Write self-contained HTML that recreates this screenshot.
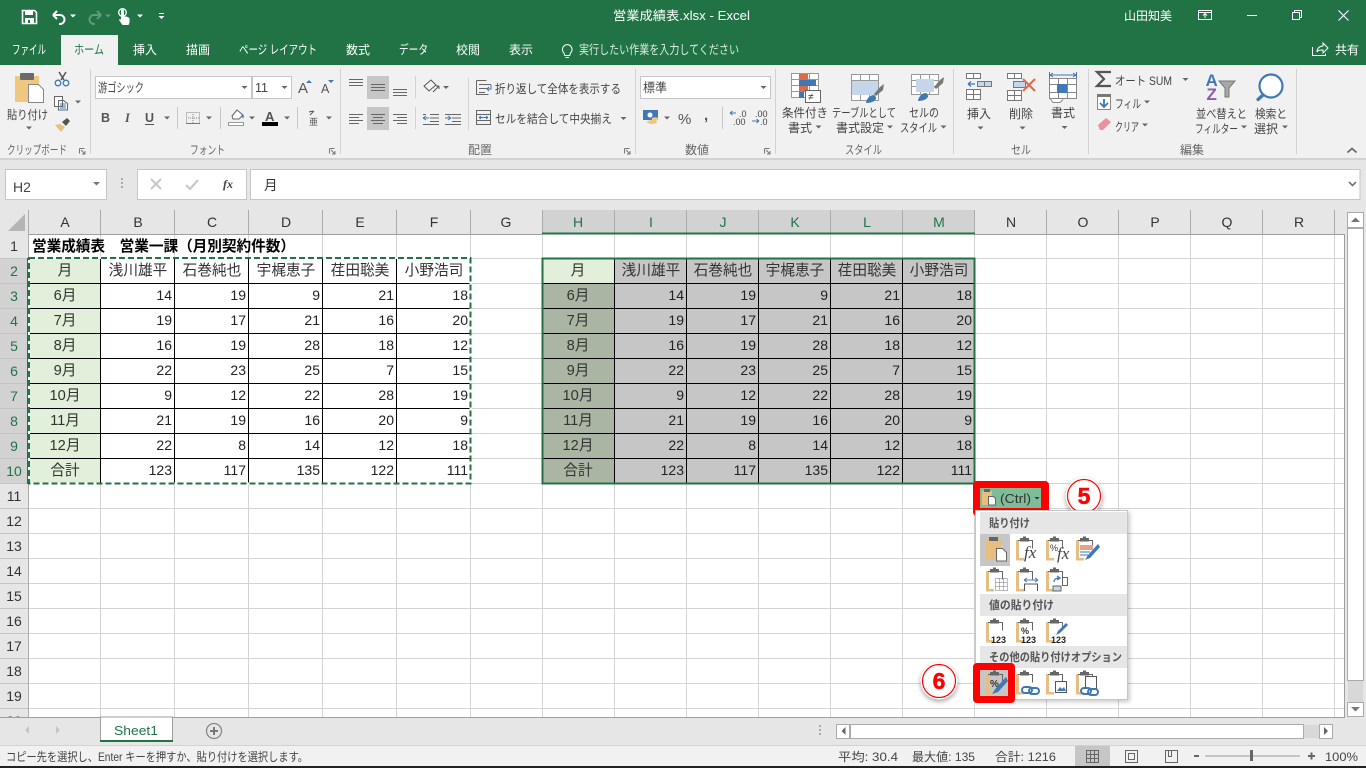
<!DOCTYPE html>
<html lang="ja"><head><meta charset="utf-8"><title>営業成績表.xlsx - Excel</title>
<style>
html,body{margin:0;padding:0;width:1366px;height:768px;overflow:hidden;background:#fff}
svg{display:block}
text{font-family:"Liberation Sans","Noto Sans CJK JP",sans-serif;font-size:11px;fill:#444}
.w{fill:#fff;font-size:12px}
.t{fill:#fff;font-size:12px}
.r{font-size:12px;fill:#444}
.g{font-size:12px;fill:#666}
.h{font-size:14px;fill:#333;text-anchor:middle}
.hs{font-size:14px;fill:#217346;text-anchor:middle}
.n{font-size:14px;fill:#222;text-anchor:end}
.c{font-size:14.67px;fill:#333;text-anchor:middle}
.m{font-size:11.500px;font-weight:bold;fill:#555}
.k{font-size:9px;font-weight:bold;fill:#222}
.fx{font-family:"Liberation Serif",serif;font-style:italic;font-size:17px;fill:#444}
</style></head><body>
<svg xmlns="http://www.w3.org/2000/svg" width="1366" height="768" viewBox="0 0 1366 768">
<defs>
<path id="c" d="M-3-1.5h6l-3 3z" fill="#666"/>
<g id="cb"><rect x="0" y="2" width="3" height="20" fill="#e6bf80"/><rect x="0" y="20" width="8" height="2.5" fill="#e6bf80"/><path d="M2 2.5h14.5v8" fill="none" stroke="#666"/><rect x="4" y="0" width="9" height="3.5" fill="#666"/><rect x="7" y="-1.500" width="3" height="2" fill="#666"/></g>
<g id="lnk"><path d="M2 4a3 3 0 0 1 3-3h4a3 3 0 0 1 0 6h-4a3 3 0 0 1-3-3zM9 5a3 3 0 0 1 3-3h4a3 3 0 0 1 0 6h-4a3 3 0 0 1-3-3z" fill="none" stroke="#3f78b5" stroke-width="2"/></g>
<clipPath id="gc"><rect x="0" y="205" width="1345" height="512"/></clipPath>
<filter id="b" x="-30%" y="-30%" width="160%" height="160%"><feGaussianBlur stdDeviation="2"/></filter>
</defs>

<!-- backgrounds -->
<rect width="1366" height="65" fill="#217346"/>
<rect y="65" width="1366" height="93" fill="#f1f1f1"/>
<rect y="158" width="1366" height="2" fill="#d2d2d2"/>
<rect y="160" width="1366" height="585" fill="#e6e6e6"/>
<rect x="61" y="35" width="57" height="30" fill="#f1f1f1"/>

<!-- QAT -->
<path d="M22.500 10.500h12l2 2v11h-14z" fill="none" stroke="#fff" stroke-width="1.600"/><rect x="25" y="10" width="8" height="5" fill="#fff"/><rect x="25" y="18" width="9" height="5" fill="#fff"/><rect x="28" y="20" width="2" height="3" fill="#217346"/>
<path d="M53 13l4-4M53 13l4 4M53 13h7a4.500 4.500 0 0 1 0 9h-1" transform="translate(0,2)" fill="none" stroke="#fff" stroke-width="2"/>
<path d="M70 14.500h6l-3 3z" fill="#fff"/>
<path d="M101 13l-4-4M101 13l-4 4M101 13h-7a4.500 4.500 0 0 0 0 9h1" transform="translate(0,2)" fill="none" stroke="#5f9b7c" stroke-width="2"/>
<path d="M105 14.500h6l-3 3z" fill="#5f9b7c"/>
<circle cx="122.500" cy="12.500" r="3.800" fill="none" stroke="#fff" stroke-width="1.300"/>
<path d="M121 11a1.500 1.500 0 0 1 3 0v5.500h2.500l3 1.500v4.500l-1 2.500h-6l-3.500-5 1-1 1 .8z" fill="#fff"/><path d="M137 14.500h6l-3 3z" fill="#fff"/>
<rect x="159" y="13" width="5" height="1" fill="#fff"/><path d="M158.500 16h6l-3 3z" fill="#fff"/>
<text x="613" y="20" style="fill:#fff;font-size:12.500px" textLength="137" lengthAdjust="spacingAndGlyphs">営業成績表.xlsx  -  Excel</text>
<text class="t" x="1124" y="20" textLength="48">山田知美</text>
<path d="M1198.500 10.500h13v9h-13zM1198.500 12.500h13M1205 18v-4M1203 15.500l2-2 2 2" fill="none" stroke="#fff"/>
<rect x="1247" y="15" width="10" height="1" fill="#fff"/>
<path d="M1292.500 12.500h7v7h-7zM1294.500 12.500v-2h7v7h-2" fill="none" stroke="#fff"/>
<path d="M1338.500 10.500l10 10M1348.500 10.500l-10 10" fill="none" stroke="#fff" stroke-width="1.100"/>

<!-- tabs -->
<text x="12" y="54" style="fill:#fff;font-size:12.500px" textLength="34" lengthAdjust="spacingAndGlyphs">ファイル</text>
<text x="74" y="54" style="font-size:12.500px;fill:#217346" textLength="30" lengthAdjust="spacingAndGlyphs">ホーム</text>
<text class="t" x="133" y="54" textLength="24">挿入</text>
<text class="t" x="186" y="54" textLength="24">描画</text>
<text x="239" y="54" style="fill:#fff;font-size:12.500px" textLength="78" lengthAdjust="spacingAndGlyphs">ページ レイアウト</text>
<text class="t" x="346" y="54" textLength="24">数式</text>
<text x="399" y="54" style="fill:#fff;font-size:12.500px" textLength="29" lengthAdjust="spacingAndGlyphs">データ</text>
<text class="t" x="456" y="54" textLength="24">校閲</text>
<text class="t" x="509" y="54" textLength="24">表示</text>
<path d="M564 53a4.800 4.800 0 1 1 6.500 0l-.8 2.500h-4.900zM565.500 57.500h3.500" fill="none" stroke="#fff"/>
<text x="579" y="54" style="font-size:12.500px;fill:#dcebe3" textLength="160" lengthAdjust="spacingAndGlyphs">実行したい作業を入力してください</text>
<path d="M1312.500 47v8.500h13v-2M1317 52c0-4 3-6 6-6v-3l5 5-5 5v-3c-3 0-5 0-6 2z" fill="none" stroke="#fff"/>
<text class="t" x="1335" y="54" textLength="24">共有</text>

<!-- ribbon dividers -->
<path d="M90.500 69v85M340.500 69v85M635.500 69v85M775.500 69v85M953.500 69v85M1088.500 69v85M1296.500 69v85" stroke="#d2d2d2"/>
<!-- group labels -->
<text class="g" x="7" y="154" textLength="60" lengthAdjust="spacingAndGlyphs">クリップボード</text>
<text class="g" x="190" y="154" textLength="35" lengthAdjust="spacingAndGlyphs">フォント</text>
<text class="g" x="468" y="154" textLength="24" lengthAdjust="spacingAndGlyphs">配置</text>
<text class="g" x="685" y="154" textLength="24" lengthAdjust="spacingAndGlyphs">数値</text>
<text class="g" x="845" y="154" textLength="37" lengthAdjust="spacingAndGlyphs">スタイル</text>
<text class="g" x="1011" y="154" textLength="20" lengthAdjust="spacingAndGlyphs">セル</text>
<text class="g" x="1180" y="154" textLength="24" lengthAdjust="spacingAndGlyphs">編集</text>
<path d="M79.500 148.500h5M79.500 148.500v5M81 150l4 4M85 151v3h-3" fill="none" stroke="#777"/>
<path d="M329.500 148.500h5M329.500 148.500v5M331 150l4 4M335 151v3h-3M624.500 148.500h5M624.500 148.500v5M626 150l4 4M630 151v3h-3M764.500 148.500h5M764.500 148.500v5M766 150l4 4M770 151v3h-3" fill="none" stroke="#777"/>
<path d="M1347.500 152.500l4.500-4 4.500 4" fill="none" stroke="#666" stroke-width="1.600"/>

<!-- clipboard group -->
<rect x="15" y="76" width="24" height="26" fill="#efc77f"/><rect x="20" y="73" width="14" height="7" rx="1" fill="#6b6b6b"/>
<path d="M28.500 84.500h10l5 5v13h-15z" fill="#fff" stroke="#888"/>
<text class="r" x="7" y="119" textLength="41" lengthAdjust="spacingAndGlyphs">貼り付け</text><use href="#c" x="29" y="128"/>
<path d="M59 72l5 8M66 72l-5 8" stroke="#555" stroke-width="1.500" fill="none"/><circle cx="58" cy="83" r="2.800" fill="none" stroke="#3f78b5" stroke-width="1.300"/><circle cx="66" cy="83" r="2.800" fill="none" stroke="#3f78b5" stroke-width="1.300"/>
<path d="M54.500 96.500h8v10h-8zM58.500 100.500h5l4 3v6.500h-9z" fill="#fff" stroke="#666"/><path d="M60 104h6M60 106h6M60 108h6" stroke="#3f78b5"/><use href="#c" x="78" y="102"/>
<path d="M55 125l6 7 4-5-5-3z" fill="#e8c07d"/><path d="M62 122l5-4 3 3-4 5z" fill="#555"/>

<!-- font group -->
<rect x="95.500" y="76.500" width="156" height="22" fill="#fff" stroke="#c6c6c6"/>
<rect x="252.500" y="76.500" width="39" height="22" fill="#fff" stroke="#c6c6c6"/>
<text x="98" y="92" style="font-size:12.500px;fill:#444" textLength="46" lengthAdjust="spacingAndGlyphs">游ゴシック</text><use href="#c" x="244.500" y="87.500"/>
<text x="255" y="92" style="font-size:12.500px;fill:#444">11</text><use href="#c" x="284.500" y="87.500"/>
<text x="298" y="93" style="font-size:15px;fill:#555">A</text><path d="M306 83h6l-3-3z" fill="#3f78b5"/>
<text x="321" y="93" style="font-size:12.500px;fill:#555">A</text><path d="M328 80h6l-3 3z" fill="#3f78b5"/>
<text x="101" y="122" style="font-size:12.500px;font-weight:bold;fill:#555">B</text>
<text x="125" y="122" style="font-size:12.500px;font-style:italic;font-weight:bold;fill:#555;font-family:'Liberation Serif',serif">I</text>
<text x="145" y="122" style="font-size:12.500px;font-weight:bold;fill:#555">U</text><rect x="145" y="124" width="9" height="1" fill="#555"/>
<use href="#c" x="167" y="118"/>
<path d="M177.500 107v22M220.500 107v22M297.500 107v22" stroke="#c6c6c6"/>
<path d="M186.500 112.500h13v11h-13zM193 112v12M186 118h14" fill="none" stroke="#888" stroke-dasharray="1 1"/><rect x="186" y="123" width="14" height="1" fill="#777"/><use href="#c" x="209" y="118"/>
<path d="M232 116l5-6 6 5-4 4h-6z" fill="#fff" stroke="#666"/><path d="M241 113l3 3-1 3z" fill="#3f78b5"/><rect x="228.500" y="122.500" width="15" height="3" fill="#fff" stroke="#999"/><use href="#c" x="252" y="118"/>
<text x="265" y="121" style="font-size:13px;font-weight:bold;fill:#555">A</text><rect x="262" y="122" width="16" height="4" fill="#000"/><use href="#c" x="287" y="118"/>
<path d="M309 112l4-1M310 115l4-4" stroke="#555" fill="none"/><text x="309" y="125" style="font-size:9px;fill:#555">亜</text><use href="#c" x="329" y="118"/>

<!-- alignment -->
<rect x="367" y="76" width="22" height="23" fill="#c6c6c6"/><rect x="367" y="107" width="22" height="23" fill="#c6c6c6"/>
<path d="M349 79.500h14M349 82.500h14M349 85.500h14M371 84.500h14M371 87.500h14M371 90.500h14M393 89.500h14M393 92.500h14M393 95.500h14" stroke="#666"/>
<path d="M349 114.500h14M349 117.500h10M349 120.500h14M349 123.500h10M371 114.500h14M373 117.500h10M371 120.500h14M373 123.500h10M393 114.500h14M397 117.500h10M393 120.500h14M397 123.500h10" stroke="#666"/>
<path d="M415.500 76v22M415.500 107v22M468.500 78v52" stroke="#d2d2d2"/>
<path d="M424 86l7-6 5 5-7 6zM433 92l6-6M439 86h-3M439 86v3" fill="none" stroke="#555"/><use href="#c" x="446" y="87.500"/>
<path d="M430 114.500h9M430 118h9M430 121.500h9M423 124.500h16M423 114.500h3" stroke="#666"/><path d="M423 118h6M423 118l3-2M423 118l3 2" stroke="#3f78b5" fill="none"/>
<path d="M445 114.500h16M452 118h9M452 121.500h9M445 124.500h16" stroke="#666"/><path d="M445 118h6M451 118l-3-2M451 118l-3 2" stroke="#3f78b5" fill="none"/>
<path d="M476.500 80.500h10M476.500 80.500v14h12M479 84.500h12M479 88.500h8M479 92.500h6" fill="none" stroke="#666"/><path d="M491 85v4h-4M487 89l2-2M487 89l2 2" fill="none" stroke="#3f78b5"/>
<text class="r" x="495" y="93" textLength="126" lengthAdjust="spacingAndGlyphs">折り返して全体を表示する</text>
<path d="M476.500 110.500h14v14h-14zM476.500 114.500h14M476.500 120.500h14" fill="none" stroke="#666"/><path d="M479 117.500h9M479 117.500l2-1.500M479 117.500l2 1.500M488 117.500l-2-1.500M488 117.500l-2 1.500" stroke="#3f78b5" fill="none"/>
<text class="r" x="495" y="123" textLength="117" lengthAdjust="spacingAndGlyphs">セルを結合して中央揃え</text><use href="#c" x="623.500" y="118.500"/>

<!-- number -->
<rect x="640.500" y="76.500" width="130" height="22" fill="#fff" stroke="#c6c6c6"/>
<text x="643" y="92" style="font-size:12.500px;fill:#444" textLength="24" lengthAdjust="spacingAndGlyphs">標準</text><use href="#c" x="763.500" y="87.500"/>
<rect x="643" y="110" width="15" height="10" fill="#3f78b5"/><circle cx="650" cy="115" r="2.500" fill="#fff"/><ellipse cx="652" cy="122" rx="5" ry="2" fill="#efc77f"/><ellipse cx="655" cy="119" rx="3.500" ry="1.800" fill="#efc77f"/><use href="#c" x="667" y="118"/>
<text x="678" y="124" style="font-size:15px;fill:#555">%</text><text x="704" y="120" style="font-size:15px;font-weight:bold;fill:#555">,</text>
<path d="M722.500 107v22" stroke="#c6c6c6"/>
<text x="739" y="117" style="font-size:9px;fill:#444">.0</text><text x="733" y="125" style="font-size:9px;fill:#444">.00</text><path d="M730 113h6M730 113l2.500-2M730 113l2.500 2" stroke="#3f78b5" fill="none"/>
<text x="755" y="117" style="font-size:9px;fill:#444">.00</text><text x="760" y="125" style="font-size:9px;fill:#444">.0</text><path d="M752 121h7M759 121l-2.500-2M759 121l-2.500 2" stroke="#3f78b5" fill="none"/>

<!-- styles -->
<path d="M791.500 73.500h27v24h-27zM791.500 79.500h27M791.500 85.500h27M791.500 91.500h27M800.500 73.500v24M809.500 73.500v24" fill="#fff" stroke="#999"/>
<rect x="799" y="74" width="9" height="6" fill="#dd6b4a"/><rect x="799" y="80" width="17" height="6" fill="#3f78b5"/><rect x="799" y="86" width="9" height="6" fill="#dd6b4a"/><rect x="799" y="92" width="5" height="6" fill="#3f78b5"/>
<rect x="805.500" y="90.500" width="15" height="12" fill="#fff" stroke="#666"/><text x="808" y="100" style="font-size:10px;fill:#333">≠</text>
<text class="r" x="782" y="117" textLength="46" lengthAdjust="spacingAndGlyphs">条件付き</text><text class="r" x="788" y="132" textLength="24" lengthAdjust="spacingAndGlyphs">書式</text><use href="#c" x="818.500" y="127"/>
<path d="M851.500 74.500h27v26h-27zM851.500 80.500h27M851.500 86.500h27M851.500 92.500h27M860.500 74.500v26M869.500 74.500v26" fill="#fff" stroke="#999"/><rect x="852" y="81" width="26" height="14" fill="#c5d5ea"/>
<path d="M880 87l-6 7 2 2 7-6 1-6z" fill="#777"/><path d="M866 103c1-6 5-8 8-8 2 1 2 3 2 4-2 3-6 4-10 4z" fill="#3f78b5"/>
<text class="r" x="832" y="117" textLength="64" lengthAdjust="spacingAndGlyphs">テーブルとして</text><text class="r" x="836" y="132" textLength="48" lengthAdjust="spacingAndGlyphs">書式設定</text><use href="#c" x="890" y="127"/>
<path d="M911.500 74.500h27v20h-27zM911.500 80.500h27M911.500 86.500h27M920.500 74.500v20M929.500 74.500v20" fill="#fff" stroke="#999"/><rect x="916" y="79" width="18" height="13" fill="#c5d5ea"/>
<path d="M940 80l-6 7 2 2 7-6 1-6z" fill="#777"/><path d="M918 101c1-6 5-8 8-8 2 1 2 3 2 4-2 3-6 4-10 4z" fill="#3f78b5"/>
<text class="r" x="909" y="117" textLength="30" lengthAdjust="spacingAndGlyphs">セルの</text><text class="r" x="900" y="132" textLength="37" lengthAdjust="spacingAndGlyphs">スタイル</text><use href="#c" x="943.500" y="127"/>

<!-- cells -->
<path d="M966.500 73.500h14v5h-14zM973.500 73.500v5M966.500 89.500h14v10h-14zM966.500 94.500h14M973.500 89.500v10" fill="#fff" stroke="#777"/>
<path d="M977.500 81.500h14v5h-14zM984.500 81.500v5" fill="#c5d5ea" stroke="#777"/><path d="M968 84h7M968 84l3-2.500M968 84l3 2.500" stroke="#3f78b5" stroke-width="1.300" fill="none"/>
<text class="r" x="967" y="118" textLength="24" lengthAdjust="spacingAndGlyphs">挿入</text><use href="#c" x="980.500" y="128"/>
<path d="M1007.500 73.500h14v5h-14zM1014.500 73.500v5M1007.500 90.500h14v10h-14zM1007.500 95.500h14M1014.500 90.500v10" fill="#fff" stroke="#777"/><path d="M1013.500 81.500h12v6h-12z" fill="#c5d5ea" stroke="#777"/>
<path d="M1023 79l12 12M1035 79l-12 12" stroke="#dd6b4a" stroke-width="2"/>
<text class="r" x="1009" y="118" textLength="24" lengthAdjust="spacingAndGlyphs">削除</text><use href="#c" x="1022.500" y="128"/>
<path d="M1049.500 72v6M1076.500 72v6M1050 75h26M1050 75l3-2M1050 75l3 2M1076 75l-3-2M1076 75l-3 2" stroke="#3f78b5" fill="none"/>
<path d="M1049.500 78.500h27v20h-27zM1049.500 84.500h27M1049.500 92.500h27M1058.500 78.500v20M1067.500 78.500v20M1050 98.500l3 4h7l3-3" fill="#fff" stroke="#888"/><rect x="1057" y="84" width="10" height="9" fill="#3f78b5"/>
<text class="r" x="1051" y="117" textLength="24" lengthAdjust="spacingAndGlyphs">書式</text><use href="#c" x="1064.500" y="127.500"/>

<!-- edit -->
<path d="M1111 72h-14l7 7-7 7h14" fill="none" stroke="#555" stroke-width="2.200"/>
<text class="r" x="1115" y="85" textLength="57" lengthAdjust="spacingAndGlyphs">オート SUM</text><use href="#c" x="1185.500" y="79.500"/>
<path d="M1097.500 94.500h13v15h-13z" fill="#fff" stroke="#888"/><rect x="1097" y="94" width="14" height="3" fill="#777"/><path d="M1104 99v8M1100 103l4 4 4-4" fill="none" stroke="#3f78b5" stroke-width="1.800"/>
<text class="r" x="1115" y="108" textLength="26" lengthAdjust="spacingAndGlyphs">フィル</text><use href="#c" x="1147" y="102"/>
<path d="M1098 125l8-7 5 4-8 8h-3z" fill="#ec8fa0"/>
<text class="r" x="1115" y="131" textLength="24" lengthAdjust="spacingAndGlyphs">クリア</text><use href="#c" x="1145" y="125"/>
<text x="1205.500" y="86" style="font-size:17px;font-weight:bold;fill:#3f78b5">A</text><text x="1206.500" y="100" style="font-size:17px;font-weight:bold;fill:#8a5bb0">Z</text>
<path d="M1219 81h16l-6 7v9h-4v-9z" fill="#a8a8a8" stroke="#777"/>
<circle cx="1271" cy="86" r="11.500" fill="#fff" stroke="#3f78b5" stroke-width="2.200"/><path d="M1263 95l-5 4.500" stroke="#3f78b5" stroke-width="3.200" stroke-linecap="round"/>
<text class="r" x="1196" y="118" textLength="51" lengthAdjust="spacingAndGlyphs">並べ替えと</text><text class="r" x="1195" y="133" textLength="43" lengthAdjust="spacingAndGlyphs">フィルター</text><use href="#c" x="1244" y="127"/>
<text class="r" x="1255" y="118" textLength="32" lengthAdjust="spacingAndGlyphs">検索と</text><text class="r" x="1254" y="133" textLength="24" lengthAdjust="spacingAndGlyphs">選択</text><use href="#c" x="1285" y="127"/>

<!-- formula bar -->
<rect x="5.500" y="169.500" width="101" height="30" fill="#fff" stroke="#c6c6c6"/>
<text x="13" y="192" style="font-size:14px;fill:#444">H2</text><path d="M93 182h7l-3.500 3.500z" fill="#777"/>
<path d="M122 178v12" stroke="#aaa" stroke-dasharray="2 2" stroke-width="2"/>
<rect x="137.500" y="169.500" width="109" height="30" fill="#fff" stroke="#c6c6c6"/>
<rect x="250.500" y="169.500" width="1109.500" height="30" fill="#fff" stroke="#c6c6c6"/>
<path d="M151 179l10 10M161 179l-10 10" stroke="#c8c8c8" stroke-width="2"/><path d="M186 185l4 4 8-9" fill="none" stroke="#c8c8c8" stroke-width="2.200"/>
<text class="fx" x="223" y="188" style="font-size:12px;font-weight:bold">fx</text>
<text x="264" y="190" style="font-size:13.500px;fill:#333">月</text>
<path d="M1349 182l3.500 3.500 3.500-3.500" fill="none" stroke="#666" stroke-width="1.500"/>

<!-- column headers -->
<rect x="29" y="210" width="1316" height="24" fill="#e6e6e6"/>
<rect x="542" y="210" width="433" height="24" fill="#d2d2d2"/>
<path d="M8 231l17-17v17z" fill="#b5b5b5"/>
<path d="M28.500 210v24M100.500 210v24M174.500 210v24M248.500 210v24M322.500 210v24M396.500 210v24M470.500 210v24M542.500 210v24M614.500 210v24M686.500 210v24M758.500 210v24M830.500 210v24M902.500 210v24M974.500 210v24M1046.500 210v24M1118.500 210v24M1190.500 210v24M1262.500 210v24M1334.500 210v24" stroke="#ababab"/>
<text class="h" x="65" y="227">A</text><text class="h" x="138" y="227">B</text><text class="h" x="212" y="227">C</text><text class="h" x="286" y="227">D</text><text class="h" x="360" y="227">E</text><text class="h" x="434" y="227">F</text><text class="h" x="506" y="227">G</text>
<text class="hs" x="578" y="227">H</text><text class="hs" x="651" y="227">I</text><text class="hs" x="723" y="227">J</text><text class="hs" x="795" y="227">K</text><text class="hs" x="867" y="227">L</text><text class="hs" x="939" y="227">M</text>
<text class="h" x="1011" y="227">N</text><text class="h" x="1083" y="227">O</text><text class="h" x="1155" y="227">P</text><text class="h" x="1227" y="227">Q</text><text class="h" x="1299" y="227">R</text>

<g clip-path="url(#gc)">
<!-- sheet white -->
<rect x="29" y="234" width="1316" height="483" fill="#fff"/>
<!-- row headers -->
<rect x="0" y="234" width="28" height="483" fill="#e6e6e6"/>
<rect x="0" y="259" width="28" height="225" fill="#d2d2d2"/>
<path d="M0 258.500h28M0 283.500h28M0 308.500h28M0 333.500h28M0 358.500h28M0 383.500h28M0 408.500h28M0 433.500h28M0 458.500h28M0 483.500h28M0 508.500h28M0 533.500h28M0 558.500h28M0 583.500h28M0 608.500h28M0 633.500h28M0 658.500h28M0 683.500h28M0 708.500h28" stroke="#c4c4c4"/>
<path d="M28.500 234v483" stroke="#ababab"/>
<text class="h" x="14" y="251">1</text>
<text class="hs" x="14" y="276">2</text><text class="hs" x="14" y="301">3</text><text class="hs" x="14" y="326">4</text><text class="hs" x="14" y="351">5</text><text class="hs" x="14" y="376">6</text><text class="hs" x="14" y="401">7</text><text class="hs" x="14" y="426">8</text><text class="hs" x="14" y="451">9</text><text class="hs" x="14" y="476">10</text>
<text class="h" x="14" y="501">11</text><text class="h" x="14" y="526">12</text><text class="h" x="14" y="551">13</text><text class="h" x="14" y="576">14</text><text class="h" x="14" y="601">15</text><text class="h" x="14" y="626">16</text><text class="h" x="14" y="651">17</text><text class="h" x="14" y="676">18</text><text class="h" x="14" y="701">19</text><text class="h" x="14" y="726">20</text>
<!-- gridlines -->
<path d="M100.500 234v483M174.500 234v483M248.500 234v483M322.500 234v483M396.500 234v483M470.500 234v483M542.500 234v483M614.500 234v483M686.500 234v483M758.500 234v483M830.500 234v483M902.500 234v483M974.500 234v483M1046.500 234v483M1118.500 234v483M1190.500 234v483M1262.500 234v483M1334.500 234v483M29 258.500h1316M29 283.500h1316M29 308.500h1316M29 333.500h1316M29 358.500h1316M29 383.500h1316M29 408.500h1316M29 433.500h1316M29 458.500h1316M29 483.500h1316M29 508.500h1316M29 533.500h1316M29 558.500h1316M29 583.500h1316M29 608.500h1316M29 633.500h1316M29 658.500h1316M29 683.500h1316M29 708.500h1316" stroke="#d4d4d4"/>
</g>
<path d="M29 234.500h513M975 234.500h369.500v483" fill="none" stroke="#9e9e9e"/>
<rect x="542" y="232.500" width="433" height="2" fill="#217346"/>
<rect x="27" y="258" width="2" height="226" fill="#217346"/>

<!-- left table -->
<rect x="29" y="259" width="71.500" height="225" fill="#e2efda"/>
<path d="M100.500 258v226M174.500 258v226M248.500 258v226M322.500 258v226M396.500 258v226M29 283.500h441M29 308.500h441M29 333.500h441M29 358.500h441M29 383.500h441M29 408.500h441M29 433.500h441M29 458.500h441" stroke="#000"/>
<rect x="29" y="258" width="441.500" height="225.500" fill="none" stroke="#fff" stroke-width="2"/>
<rect x="29" y="258" width="441.500" height="225.500" fill="none" stroke="#217346" stroke-width="2" stroke-dasharray="6 3"/>
<text x="32" y="251" style="font-size:14.67px;font-weight:bold;fill:#000" textLength="263">営業成績表　営業一課（月別契約件数）</text>
<text class="c" x="65" y="275">月</text><text class="c" x="138" y="275">浅川雄平</text><text class="c" x="212" y="275">石巻純也</text><text class="c" x="286" y="275">宇梶恵子</text><text class="c" x="360" y="275">荏田聡美</text><text class="c" x="434" y="275">小野浩司</text>
<text class="c" x="65" y="300">6月</text><text class="c" x="65" y="325">7月</text><text class="c" x="65" y="350">8月</text><text class="c" x="65" y="375">9月</text><text class="c" x="65" y="400">10月</text><text class="c" x="65" y="425">11月</text><text class="c" x="65" y="450">12月</text><text class="c" x="65" y="475">合計</text>
<text class="n" x="172" y="300">14</text><text class="n" x="172" y="325">19</text><text class="n" x="172" y="350">16</text><text class="n" x="172" y="375">22</text><text class="n" x="172" y="400">9</text><text class="n" x="172" y="425">21</text><text class="n" x="172" y="450">22</text><text class="n" x="172" y="475">123</text>
<text class="n" x="246" y="300">19</text><text class="n" x="246" y="325">17</text><text class="n" x="246" y="350">19</text><text class="n" x="246" y="375">23</text><text class="n" x="246" y="400">12</text><text class="n" x="246" y="425">19</text><text class="n" x="246" y="450">8</text><text class="n" x="246" y="475">117</text>
<text class="n" x="320" y="300">9</text><text class="n" x="320" y="325">21</text><text class="n" x="320" y="350">28</text><text class="n" x="320" y="375">25</text><text class="n" x="320" y="400">22</text><text class="n" x="320" y="425">16</text><text class="n" x="320" y="450">14</text><text class="n" x="320" y="475">135</text>
<text class="n" x="394" y="300">21</text><text class="n" x="394" y="325">16</text><text class="n" x="394" y="350">18</text><text class="n" x="394" y="375">7</text><text class="n" x="394" y="400">28</text><text class="n" x="394" y="425">20</text><text class="n" x="394" y="450">12</text><text class="n" x="394" y="475">122</text>
<text class="n" x="468" y="300">18</text><text class="n" x="468" y="325">20</text><text class="n" x="468" y="350">12</text><text class="n" x="468" y="375">15</text><text class="n" x="468" y="400">19</text><text class="n" x="468" y="425">9</text><text class="n" x="468" y="450">18</text><text class="n" x="468" y="475">111</text>

<!-- right table -->
<rect x="543" y="259" width="432" height="225" fill="#c6c6c6"/>
<rect x="543" y="284" width="71.500" height="200" fill="#aab6a3"/>
<rect x="543" y="259" width="71.500" height="24.500" fill="#e2efda"/>
<path d="M614.500 258v226M686.500 258v226M758.500 258v226M830.500 258v226M902.500 258v226M543 283.500h432M543 308.500h432M543 333.500h432M543 358.500h432M543 383.500h432M543 408.500h432M543 433.500h432M543 458.500h432" stroke="#000"/>
<rect x="542.500" y="258.500" width="432" height="225" fill="none" stroke="#217346" stroke-width="2"/>
<text class="c" x="578" y="275">月</text><text class="c" x="651" y="275">浅川雄平</text><text class="c" x="723" y="275">石巻純也</text><text class="c" x="795" y="275">宇梶恵子</text><text class="c" x="867" y="275">荏田聡美</text><text class="c" x="939" y="275">小野浩司</text>
<text class="c" x="578" y="300">6月</text><text class="c" x="578" y="325">7月</text><text class="c" x="578" y="350">8月</text><text class="c" x="578" y="375">9月</text><text class="c" x="578" y="400">10月</text><text class="c" x="578" y="425">11月</text><text class="c" x="578" y="450">12月</text><text class="c" x="578" y="475">合計</text>
<text class="n" x="684" y="300">14</text><text class="n" x="684" y="325">19</text><text class="n" x="684" y="350">16</text><text class="n" x="684" y="375">22</text><text class="n" x="684" y="400">9</text><text class="n" x="684" y="425">21</text><text class="n" x="684" y="450">22</text><text class="n" x="684" y="475">123</text>
<text class="n" x="756" y="300">19</text><text class="n" x="756" y="325">17</text><text class="n" x="756" y="350">19</text><text class="n" x="756" y="375">23</text><text class="n" x="756" y="400">12</text><text class="n" x="756" y="425">19</text><text class="n" x="756" y="450">8</text><text class="n" x="756" y="475">117</text>
<text class="n" x="828" y="300">9</text><text class="n" x="828" y="325">21</text><text class="n" x="828" y="350">28</text><text class="n" x="828" y="375">25</text><text class="n" x="828" y="400">22</text><text class="n" x="828" y="425">16</text><text class="n" x="828" y="450">14</text><text class="n" x="828" y="475">135</text>
<text class="n" x="900" y="300">21</text><text class="n" x="900" y="325">16</text><text class="n" x="900" y="350">18</text><text class="n" x="900" y="375">7</text><text class="n" x="900" y="400">28</text><text class="n" x="900" y="425">20</text><text class="n" x="900" y="450">12</text><text class="n" x="900" y="475">122</text>
<text class="n" x="972" y="300">18</text><text class="n" x="972" y="325">20</text><text class="n" x="972" y="350">12</text><text class="n" x="972" y="375">15</text><text class="n" x="972" y="400">19</text><text class="n" x="972" y="425">9</text><text class="n" x="972" y="450">18</text><text class="n" x="972" y="475">111</text>

<!-- vertical scrollbar -->
<rect x="1347.500" y="212.500" width="16" height="15" fill="#fff" stroke="#ababab"/><path d="M1351 222h9l-4.500-4.500z" fill="#777"/>
<rect x="1347.500" y="228.500" width="16" height="452" fill="#fff" stroke="#ababab"/>
<rect x="1348" y="681" width="15" height="21" fill="#d8d8d8"/>
<rect x="1347.500" y="702.500" width="16" height="14" fill="#fff" stroke="#ababab"/><path d="M1351 707h9l-4.500 4.500z" fill="#777"/>

<!-- sheet tab bar -->
<path d="M0 717.500h1345" stroke="#9e9e9e"/>
<path d="M29 726l-4 4 4 4zM56 726l4 4-4 4z" fill="#c4c4c4"/>
<rect x="100.500" y="717" width="72" height="24" fill="#fff" stroke="#9e9e9e"/><rect x="100" y="740" width="73" height="2" fill="#217346"/>
<text x="114" y="735" style="font-size:12.500px;fill:#217346" textLength="44" lengthAdjust="spacingAndGlyphs">Sheet1</text>
<circle cx="214" cy="731" r="7.500" fill="none" stroke="#888" stroke-width="1.300"/><path d="M210 731h8M214 727v8" stroke="#777" stroke-width="2"/>
<path d="M820 725v12" stroke="#aaa" stroke-width="2" stroke-dasharray="2 2"/>
<rect x="836.500" y="724.500" width="13" height="14" fill="#fff" stroke="#ababab"/><path d="M845.500 727v8l-4-4z" fill="#666"/>
<rect x="850.500" y="724.500" width="453" height="14" fill="#fff" stroke="#ababab"/>
<rect x="1304" y="725" width="15" height="13" fill="#d8d8d8"/>
<rect x="1319.500" y="724.500" width="13" height="14" fill="#fff" stroke="#ababab"/><path d="M1324 727v8l4-4z" fill="#666"/>

<!-- status bar -->
<rect y="745" width="1366" height="21" fill="#f1f1f1"/>
<path d="M0 745.500h1366" stroke="#d2d2d2"/>
<rect y="766" width="1366" height="2" fill="#222"/>
<text class="r" x="6" y="761" textLength="302" lengthAdjust="spacingAndGlyphs">コピー先を選択し、Enter キーを押すか、貼り付けを選択します。</text>
<text class="r" x="838" y="761" textLength="60" lengthAdjust="spacingAndGlyphs">平均: 30.4</text>
<text class="r" x="912" y="761" textLength="63" lengthAdjust="spacingAndGlyphs">最大値: 135</text>
<text class="r" x="995" y="761" textLength="61" lengthAdjust="spacingAndGlyphs">合計: 1216</text>
<rect x="1075" y="746" width="35" height="20" fill="#c6c6c6"/>
<path d="M1086.500 750.500h12v12h-12zM1086.500 754.500h12M1086.500 758.500h12M1090.500 750.500v12M1094.500 750.500v12" fill="none" stroke="#666"/>
<path d="M1125.500 750.500h12v12h-12zM1128.500 753.500h6v6h-6z" fill="none" stroke="#666"/>
<path d="M1165.500 750.500h12v12h-12zM1171.500 750.500v6h-3v-6" fill="none" stroke="#666"/>
<rect x="1194" y="755" width="5" height="2" fill="#666"/>
<rect x="1205" y="755.500" width="95" height="1" fill="#999"/>
<rect x="1250" y="750" width="3" height="11" fill="#666"/>
<path d="M1308 756h7M1311.500 752.500v7" stroke="#666" stroke-width="2"/>
<text class="r" x="1325" y="761" textLength="33" lengthAdjust="spacingAndGlyphs">100%</text>

<!-- Ctrl button -->
<rect x="973" y="481" width="76" height="35" rx="4" fill="#f00"/>
<rect x="980" y="488" width="61" height="20" fill="#7fbc98"/>
<rect x="982" y="491" width="10" height="14" fill="#e8c07d"/><rect x="984" y="489" width="6" height="3" fill="#666"/><path d="M988.500 496.500h5l2 2v6.500h-7z" fill="#fff" stroke="#666"/>
<text x="1000" y="503" style="font-size:12.500px;fill:#333" textLength="31" lengthAdjust="spacingAndGlyphs">(Ctrl)</text><path d="M1034.500 497h5l-2.500 2.500z" fill="#333"/>

<!-- circle 5 -->
<circle cx="1084" cy="498" r="19" fill="#000" opacity=".3" filter="url(#b)"/>
<circle cx="1084" cy="496" r="18.500" fill="#fff"/><circle cx="1084" cy="496" r="16.500" fill="#fff" stroke="#f00" stroke-width="1.200"/>
<text x="1084" y="504" text-anchor="middle" style="font-size:23px;font-weight:bold;fill:#f00;stroke:#f00;stroke-width:.5px">5</text>

<!-- paste menu -->
<rect x="977" y="512" width="153" height="190" fill="#000" opacity=".2" filter="url(#b)"/>
<rect x="975.500" y="510.500" width="152" height="189" fill="#fff" stroke="#c6c6c6"/>
<rect x="980" y="512" width="147" height="22" fill="#e6e6e6"/>
<rect x="980" y="594" width="147" height="22" fill="#e6e6e6"/>
<rect x="980" y="646" width="147" height="22" fill="#e6e6e6"/>
<text class="m" x="989" y="527" textLength="41" lengthAdjust="spacingAndGlyphs">貼り付け</text>
<text class="m" x="989" y="609" textLength="65" lengthAdjust="spacingAndGlyphs">値の貼り付け</text>
<text class="m" x="989" y="661" textLength="133" lengthAdjust="spacingAndGlyphs">その他の貼り付けオプション</text>
<rect x="980" y="534" width="30" height="32" fill="#c6c6c6"/>
<!-- row 1 -->
<rect x="986" y="539" width="16" height="21" fill="#e6bf80"/><rect x="989" y="537" width="9" height="4" fill="#666"/><path d="M996.500 548.500h6l4 4v8.500h-10z" fill="#fff" stroke="#666"/>
<use href="#cb" x="1016" y="538"/><text class="fx" x="1024" y="558">fx</text>
<use href="#cb" x="1046" y="538"/><text x="1050" y="551" style="font-size:9px;fill:#333">%</text><text class="fx" x="1057" y="559">fx</text>
<use href="#cb" x="1076" y="538"/><rect x="1080" y="545" width="13" height="5" fill="#e9a08a"/><path d="M1080 552h10M1080 555h8" stroke="#3f78b5"/><path d="M1098 544l-10 11-3 5 5-2 10-11z" fill="#3f78b5"/>
<!-- row 2 -->
<use href="#cb" x="986" y="569"/><path d="M995.500 578.500h12v12h-12zM999.500 578.500v12M1003.500 578.500v12M995.500 582.500h12M995.500 586.500h12" fill="none" stroke="#777" stroke-dasharray="1 1"/>
<use href="#cb" x="1016" y="569"/><path d="M1024 580h14M1024 580l3-2M1024 580l3 2M1038 580l-3-2M1038 580l-3 2" stroke="#3f78b5" fill="none"/><path d="M1024.500 591v-7h13v7" fill="none" stroke="#555"/>
<use href="#cb" x="1046" y="569"/><rect x="1062.500" y="577.500" width="5" height="8" fill="#fff" stroke="#666"/><rect x="1053" y="586" width="8" height="5" fill="#c5d5ea" stroke="#666"/><path d="M1054 582c0-3 2-4 6-4M1057 576l3 2-3 2" stroke="#3f78b5" fill="none" stroke-width="1.300"/>
<!-- row 3 -->
<use href="#cb" x="986" y="620"/><text class="k" x="991" y="643">123</text>
<use href="#cb" x="1016" y="620"/><text x="1021" y="634" style="font-size:9px;font-weight:bold;fill:#333">%</text><text class="k" x="1021" y="643">123</text>
<use href="#cb" x="1046" y="620"/><path d="M1066 623l-8 8-2 4 4-2 8-8z" fill="#3f78b5"/><text class="k" x="1051" y="643">123</text>
<!-- row 4 -->
<rect x="973" y="663" width="42" height="40" rx="4" fill="#f00"/>
<rect x="980" y="670" width="28" height="26" fill="#c6c6c6"/>
<use href="#cb" x="986" y="672"/><text x="990" y="687" style="font-size:10px;font-weight:bold;fill:#333">%</text><path d="M1006 677l-10 11-4 6 6-2 10-11z" fill="#3f78b5"/>
<use href="#cb" x="1016" y="672"/><use href="#lnk" x="1020" y="686"/>
<use href="#cb" x="1046" y="672"/><rect x="1055.500" y="681.500" width="11" height="11" fill="#fff" stroke="#555"/><path d="M1057 691l3-4 2 2 2-2 2 4z" fill="#3f78b5"/>
<use href="#cb" x="1076" y="672"/><rect x="1085.500" y="676.500" width="11" height="12" fill="#fff" stroke="#555"/><use href="#lnk" x="1079" y="687"/>

<!-- circle 6 -->
<circle cx="939" cy="683" r="19" fill="#000" opacity=".3" filter="url(#b)"/>
<circle cx="939" cy="681" r="18.500" fill="#fff"/><circle cx="939" cy="681" r="16.500" fill="#fff" stroke="#f00" stroke-width="1.200"/>
<text x="939" y="689" text-anchor="middle" style="font-size:23px;font-weight:bold;fill:#f00;stroke:#f00;stroke-width:.5px">6</text>
</svg>
</body></html>
